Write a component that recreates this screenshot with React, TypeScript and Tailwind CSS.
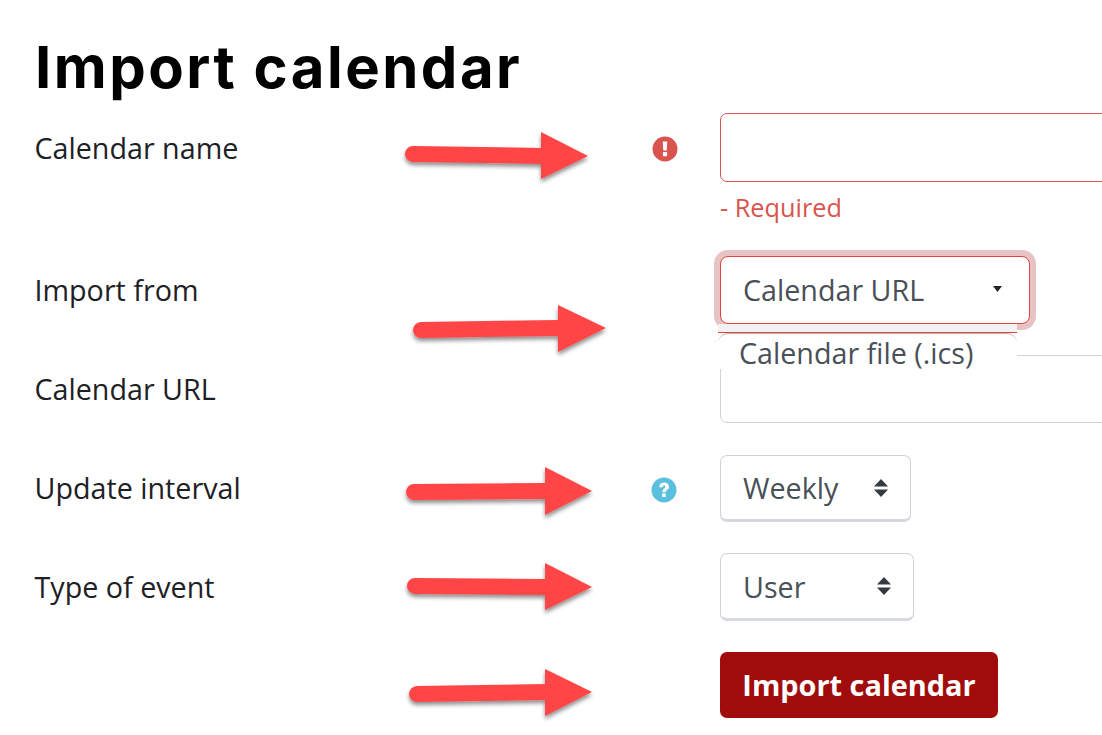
import React from "react";

const arrows = [
  { tx: 413, ty: 154, bx: 541, by: 156, top: 132, bot: 179, tip: 588, tipY: 156 },
  { tx: 421, ty: 330, bx: 558, by: 328, top: 305, bot: 352, tip: 606, tipY: 328 },
  { tx: 414, ty: 492, bx: 545, by: 491, top: 467, bot: 515, tip: 592, tipY: 491 },
  { tx: 415, ty: 586, bx: 545, by: 587, top: 563, bot: 610, tip: 592, tipY: 587 },
  { tx: 417, ty: 694, bx: 545, by: 692, top: 669, bot: 716, tip: 592, tipY: 692 },
];

function Arrows() {
  return (
    <svg className="absolute left-0 top-0 pointer-events-none" width="1102" height="735" viewBox="0 0 1102 735">
      <defs>
        <filter id="arrowShadow" x="-10%" y="-30%" width="120%" height="170%">
          <feDropShadow dx="0" dy="3" stdDeviation="2" floodColor="#000" floodOpacity="0.45" />
        </filter>
      </defs>
      {arrows.map((a, i) => (
        <g key={i} filter="url(#arrowShadow)">
          <path d={`M${a.tx} ${a.ty} L${a.bx + 2} ${a.by}`} stroke="#ff4545" strokeWidth="16" strokeLinecap="round" fill="none" />
          <polygon points={`${a.bx},${a.top} ${a.tip},${a.tipY} ${a.bx},${a.bot}`} fill="#ff4545" />
        </g>
      ))}
    </svg>
  );
}

function UpDown() {
  return (
    <svg width="14" height="18" viewBox="0 0 14 18" className="shrink-0">
      <polygon points="7,0 14,7.5 0,7.5" fill="#343a40" />
      <polygon points="7,18 14,10.5 0,10.5" fill="#343a40" />
    </svg>
  );
}

function Row({ label, labelTop, icon, children, className }: { label?: string; labelTop?: string; icon?: React.ReactNode; children: React.ReactNode; className?: string }) {
  return (
    <div className={`flex ${className ?? ""}`}>
      <div className={`w-[617px] shrink-0 -translate-x-[0.5px] text-[28.7px] leading-[40px] text-[#1d2125] ${labelTop ?? ""}`}>{label}</div>
      <div className="w-[68px] shrink-0 pt-[23px]">{icon}</div>
      <div className="flex-1 min-w-0">{children}</div>
    </div>
  );
}

export default function App() {
  return (
    <div className="relative w-[1102px] h-[735px] overflow-hidden bg-white pl-[35px] font-['Open_Sans',sans-serif]">
      <h1 className="font-['Inter',sans-serif] font-bold text-[58px] leading-[70px] pt-[32px] h-[113px] text-black tracking-[2.5px] whitespace-nowrap">
        Import calendar
      </h1>

      <Row
        label="Calendar name"
        labelTop="pt-[15px]"
        icon={
          <svg width="26" height="26" viewBox="0 0 26 26">
            <circle cx="13" cy="13" r="12.5" fill="#d9534f" />
            <path d="M10.7 5.5h4.6l-.6 9h-3.4z" fill="#fff" />
            <rect x="10.9" y="16" width="4.2" height="4.2" rx="0.6" fill="#fff" />
          </svg>
        }
        className="h-[144px]"
      >
        <div className="h-[69px] w-[500px] rounded-[7px] border border-[#d9534f] bg-white" />
        <div className="mt-[9px] text-[25.3px] leading-[33px] text-[#d9534f]">- Required</div>
      </Row>

      <Row label="Import from" labelTop="pt-[13px]" className="h-[98px]">
        <div className="-mt-[1px] w-[310px] h-[68px] rounded-[8px] border border-[#e04343] bg-white shadow-[0_0_0_6px_#e8c3c4] flex items-center pl-[22px] pr-[27px] justify-between text-[28.7px] text-[#495057]">
          <span>Calendar URL</span>
          <svg width="9" height="6" viewBox="0 0 9 6" className="-mt-[2px]"><polygon points="0,0 9,0 4.5,6" fill="#212529" /></svg>
        </div>
      </Row>

      <Row label="Calendar URL" labelTop="pt-[14px]" className="h-[100px]">
        <div className="h-[68px] w-[500px] rounded-[7px] border border-[#ced4da] bg-white" />
      </Row>

      <Row
        label="Update interval"
        labelTop="pt-[13px]"
        icon={
          <svg width="26" height="26" viewBox="0 0 26 26" className="-mt-[1px] -ml-[1px]">
            <circle cx="13" cy="13" r="12.5" fill="#5bc0de" />
            <path d="M8.2 10.2c0-2.9 2.1-4.6 4.9-4.6s4.9 1.800 4.9 4.100c0 3.200-3.300 3.200-3.300 5.500h-3.400c0-3.800 3.100-3.600 3.100-5.400 0-.7-.5-1.200-1.300-1.200-.9 0-1.300.6-1.400 1.700z" fill="#fff" />
            <rect x="11.2" y="16.5" width="3.6" height="3.6" rx="0.5" fill="#fff" />
          </svg>
        }
        className="h-[98px]"
      >
        <div className="w-[191px] h-[67px] rounded-[7px] border border-[#ced4da] border-b-[3px] border-b-[#d5d8dc] bg-white flex items-center pl-[22px] pr-[22px] justify-between text-[28.7px] text-[#495057]">
          <span>Weekly</span>
          <UpDown />
        </div>
      </Row>

      <Row label="Type of event" labelTop="pt-[14px]" className="h-[99px]">
        <div className="w-[194px] h-[68px] rounded-[7px] border border-[#ced4da] border-b-[3px] border-b-[#d5d8dc] bg-white flex items-center pl-[22px] pr-[22px] justify-between text-[28.7px] text-[#495057]">
          <span className="translate-y-[1px]">User</span>
          <UpDown />
        </div>
      </Row>

      <Row>
        <button className="w-[278px] h-[66px] rounded-[7px] bg-[#a00c0c] text-white font-bold text-[28.9px] flex items-center justify-center">
          Import calendar
        </button>
      </Row>

      {/* open dropdown list over the URL field */}
      <div className="absolute left-[718px] top-[324px] w-[299px]">
        <div className="h-[9px] bg-[#f2f2f2] border-b border-[#e04343]" />
        <div className="h-[36px] rounded-t-[10px] bg-white border-t border-[#b8b8b8] pl-[21px] text-[28.7px] leading-[38px] text-[#495057] whitespace-nowrap">
          Calendar file (.ics)
        </div>
      </div>

      <Arrows />
    </div>
  );
}
